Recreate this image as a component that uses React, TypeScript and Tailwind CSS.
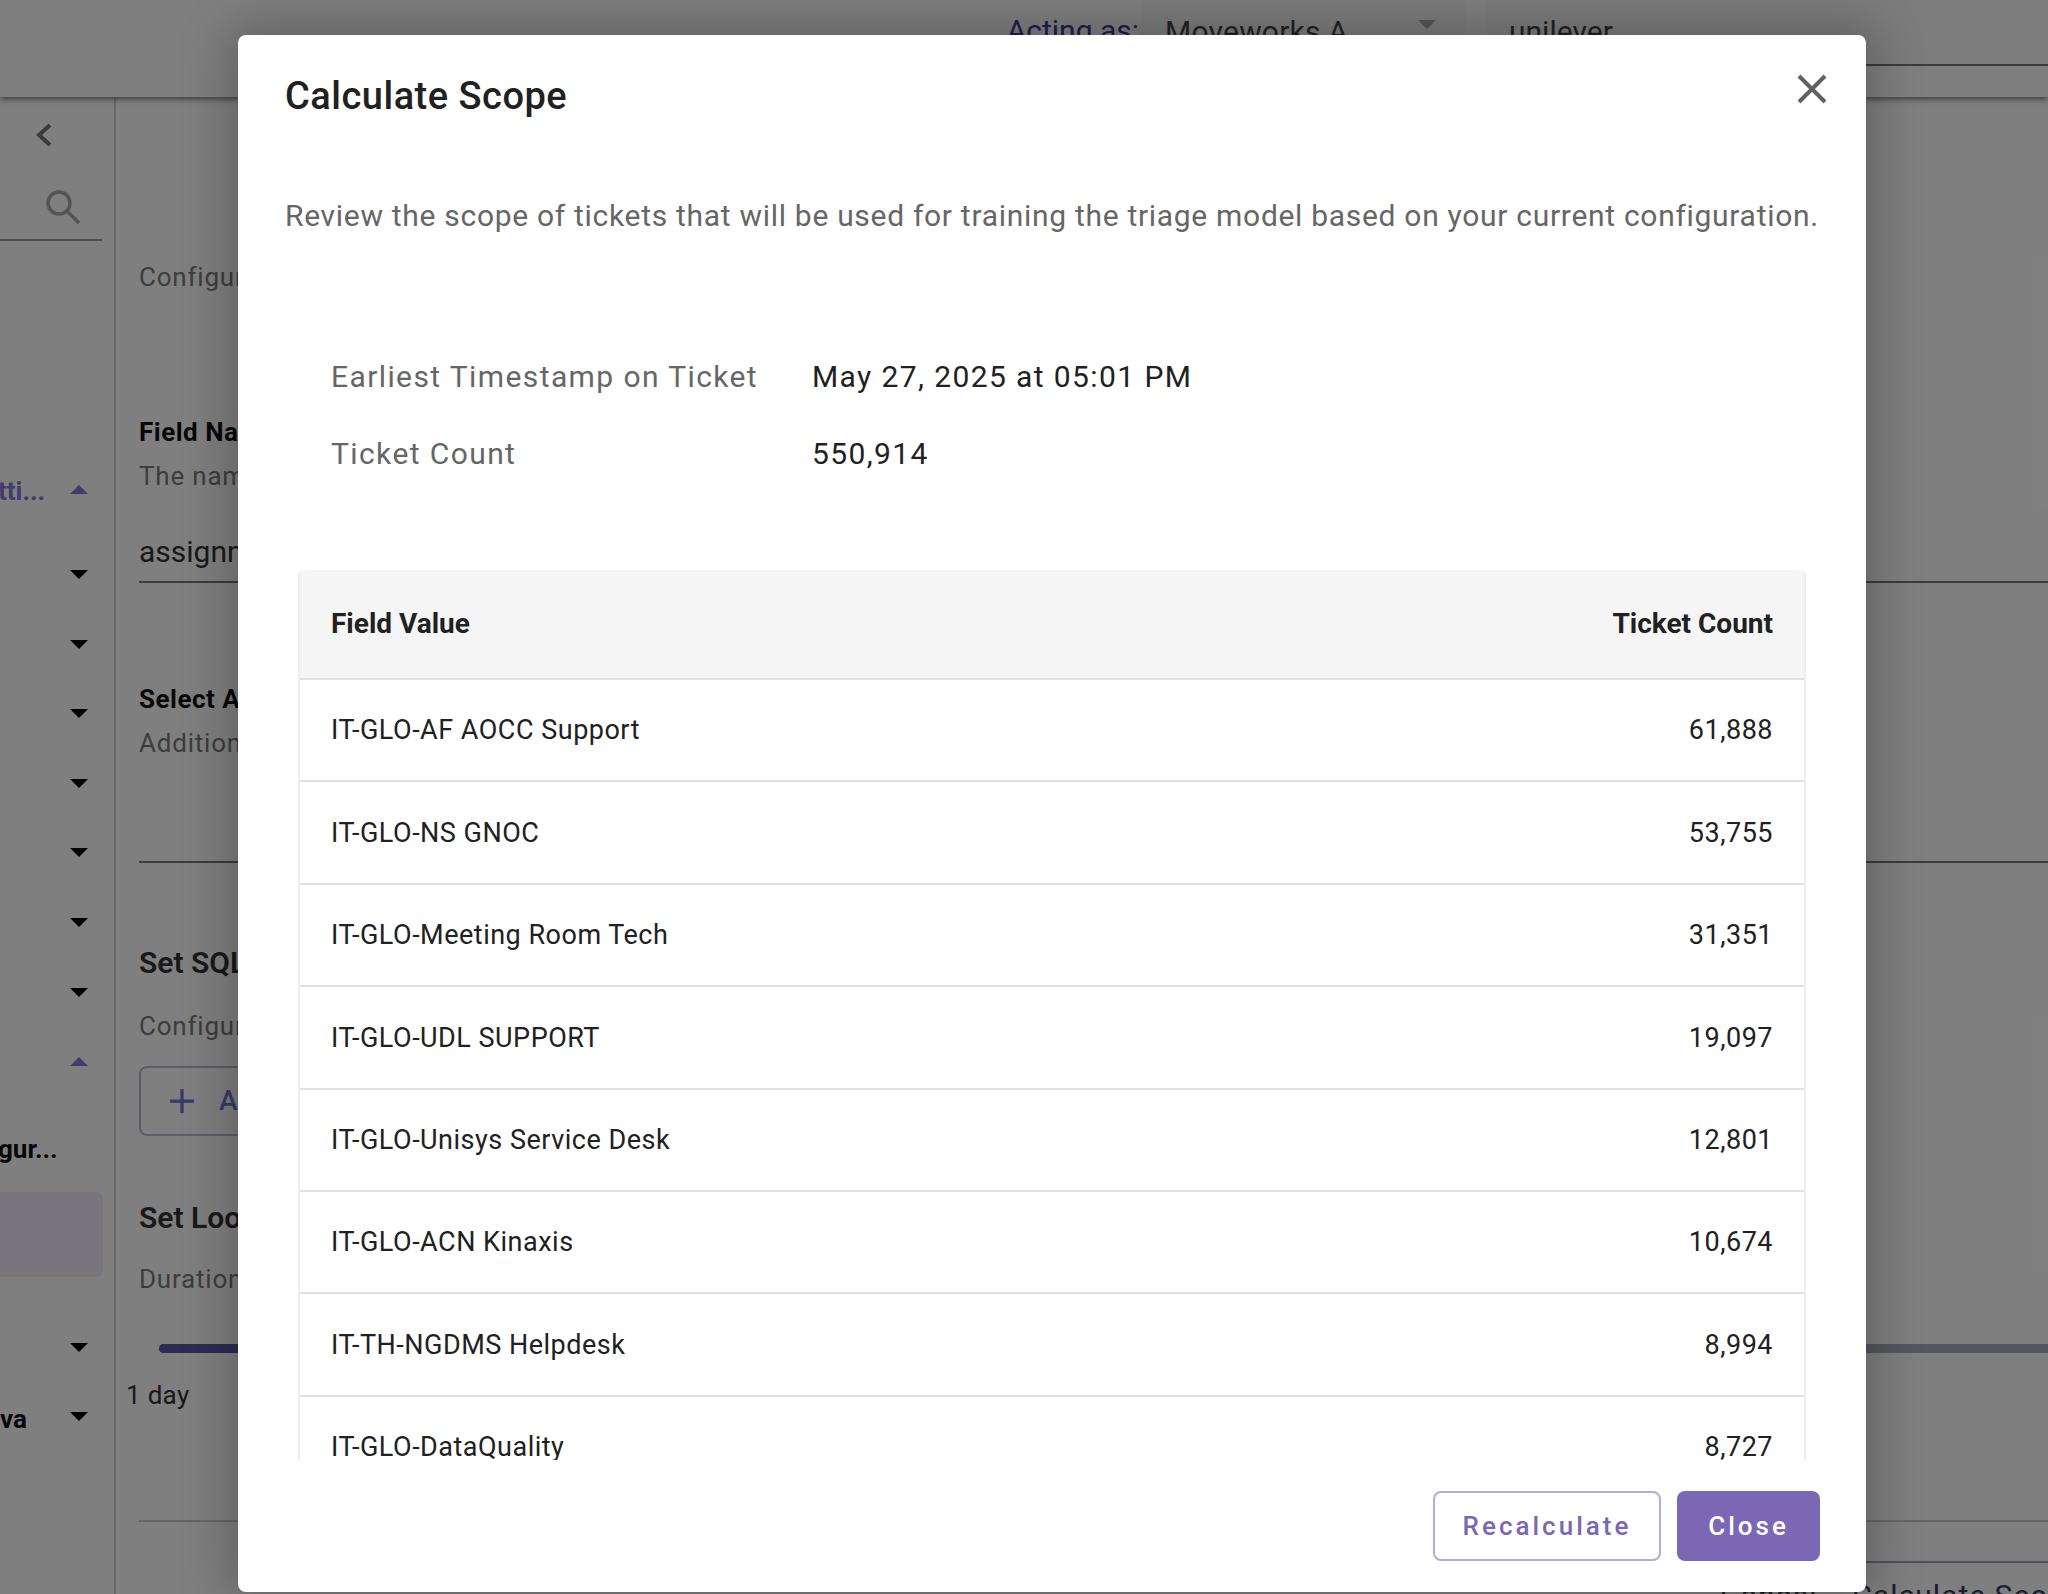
const rows = [
  ["IT-GLO-AF AOCC Support", "61,888"],
  ["IT-GLO-NS GNOC", "53,755"],
  ["IT-GLO-Meeting Room Tech", "31,351"],
  ["IT-GLO-UDL SUPPORT", "19,097"],
  ["IT-GLO-Unisys Service Desk", "12,801"],
  ["IT-GLO-ACN Kinaxis", "10,674"],
  ["IT-TH-NGDMS Helpdesk", "8,994"],
  ["IT-GLO-DataQuality", "8,727"],
  ["IT-GLO-Service Now", "7,412"],
];

function Caret({ up, className }: { up?: boolean; className: string }) {
  return (
    <svg viewBox="0 0 18 9" className={"w-[18px] h-[9px] " + className} fill="currentColor">
      <path d={up ? "M0 9 L9 0 L18 9 Z" : "M0 0 L18 0 L9 9 Z"} />
    </svg>
  );
}

function Sidebar() {
  return (
    <aside className="w-[116px] shrink-0 border-r-2 border-[#d2d2d2] h-[1497px] relative overflow-hidden">
      <div className="pl-[36px] pt-[26px] h-[144px] border-b-2 border-[#999] w-[102px]">
        <svg viewBox="0 0 16 24" className="w-[16px] h-[24px] text-[#777]" fill="none" stroke="currentColor" strokeWidth="4">
          <path d="M14 2 L3 12 L14 22" />
        </svg>
      </div>
      <svg viewBox="0 0 36 36" className="absolute left-[45px] top-[92px] w-[36px] h-[36px] text-[#a8a8a8]" fill="none" stroke="currentColor" strokeWidth="3.5">
        <circle cx="14" cy="14" r="11" />
        <path d="M22 22 L34 34" />
      </svg>
      <Caret up className="text-[#8576d8] absolute right-[26px] top-[388px]" />
      <div className="absolute right-[26px] top-[473px] flex flex-col gap-[60.6px]">
        <Caret className="text-[#000]" />
        <Caret className="text-[#000]" />
        <Caret className="text-[#000]" />
        <Caret className="text-[#000]" />
        <Caret className="text-[#000]" />
        <Caret className="text-[#000]" />
        <Caret className="text-[#000]" />
        <Caret up className="text-[#8576d8]" />
      </div>
      <Caret className="text-[#000] absolute right-[26px] top-[1246px]" />
      <Caret className="text-[#000] absolute right-[26px] top-[1315px]" />
      <span className="absolute -left-[2px] top-[378px] text-[26px] leading-[32px] font-bold text-[#8576d8]">tti...</span>
      <span className="absolute -left-[2px] top-[1036px] text-[26px] leading-[32px] font-bold text-[#111]">gur...</span>
      <span className="absolute left-0 top-[1306px] text-[26px] leading-[32px] font-bold text-[#111]">va</span>
      <div className="absolute left-0 top-[1095px] w-[103px] h-[85px] rounded-r-[6px] bg-[#f2ebfa]" />
    </aside>
  );
}

function PageBehind() {
  return (
    <div className="w-[2048px] h-[1594px] bg-white overflow-hidden relative z-0 text-[#444]">
      <header className="relative z-10 h-[97px] flex items-start justify-end bg-white shadow-[0_2px_6px_rgba(0,0,0,0.55)]">
        <span className="text-[30px] leading-[34px] mt-[14px] mr-[2px] text-[#4438a0]">Acting as:</span>
        <div className="w-[324px] h-[66px] bg-[#f8f8f8] flex justify-between pl-[24px] pr-[29px]">
          <span className="text-[30px] leading-[40px] mt-[12px] tracking-[0.2px]">Moveworks A</span>
          <Caret className="text-[#aaa] mt-[20px]" />
        </div>
        <div className="w-[562px] h-[66px] ml-[21px] bg-[#f8f8f8] border-b-2 border-[#777] pl-[23px]">
          <span className="text-[30px] leading-[40px] block mt-[12px]">unilever</span>
        </div>
      </header>
      <div className="flex">
        <Sidebar />
        <main className="flex-1 pl-[23px] pt-[165px] text-[#7a7a7a] min-w-0">
          <p className="text-[26px] leading-[30px] tracking-[0.8px]">Configure the field used for triage</p>
          <p className="mt-[125px] text-[26px] leading-[30px] tracking-[0.5px] font-bold text-[#111]">Field Name</p>
          <p className="mt-[14px] text-[26px] leading-[30px] tracking-[0.8px]">The name of the field</p>
          <div className="mt-[41px] h-[51px] border-b-2 border-[#777] text-[30px] leading-[40px] text-[#333]">assignment_group</div>
          <p className="mt-[101px] text-[26px] leading-[30px] tracking-[0.5px] font-bold text-[#111]">Select Additional Fields</p>
          <p className="mt-[14px] text-[26px] leading-[30px] tracking-[0.8px]">Additional fields to include</p>
          <div className="mt-[103px] border-b-2 border-[#777]" />
          <p className="mt-[82px] text-[30px] leading-[36px] font-semibold text-[#333]">Set SQL Filters</p>
          <p className="mt-[30px] text-[26px] leading-[30px] tracking-[0.8px]">Configure the filters</p>
          <div className="mt-[25px] w-[400px] h-[70px] border-2 border-[#bbbbcc] rounded-[8px] flex items-center pl-[28px] gap-[24px] text-[#7272d0]">
            <svg viewBox="0 0 24 24" className="w-[26px] h-[26px]" fill="none" stroke="currentColor" strokeWidth="3"><path d="M12 1 V23 M1 12 H23" /></svg>
            <span className="text-[28px] font-medium tracking-[1px]">Add Filter</span>
          </div>
          <p className="mt-[64px] text-[30px] leading-[36px] font-semibold text-[#333]">Set Lookback</p>
          <p className="mt-[28px] text-[26px] leading-[30px] tracking-[0.8px]">Duration of lookback</p>
          <div className="mt-[50px] ml-[20px] -mr-[20px] h-[9px] rounded-full bg-[#aaaabe] relative">
            <div className="absolute left-0 top-0 h-[9px] w-[600px] rounded-full bg-[#5a56a8]" />
          </div>
          <p className="mt-[25px] -ml-[13px] text-[26px] leading-[34px] tracking-[0.3px] text-[#333]">1 day</p>
          <div className="mt-[108px] border-b-2 border-[#ccc]" />
          <div className="mt-[39px] ml-[1200px] border-b-2 border-[#9e9eb4]" />
          <div className="flex justify-end gap-[35px] -mr-[35px] mt-[10px] text-[#3a3a66] text-[30px] tracking-[1px] whitespace-nowrap">
            <span>Cancel</span>
            <span>Calculate Scope</span>
          </div>
        </main>
      </div>
    </div>
  );
}

export default function App() {
  return (
    <div className="relative w-[2048px] h-[1594px] overflow-hidden" style={{ fontFamily: "Roboto, sans-serif" }}>
      <PageBehind />
      <div className="absolute inset-0 bg-black/50" />
      <div className="absolute left-[238px] top-[35px] w-[1628px] h-[1557px] bg-white rounded-[8px] shadow-[0_0_50px_8px_rgba(0,0,0,0.25)] flex flex-col">
        <div className="flex justify-between pl-[47px] pr-[39px] pt-[36px]">
          <h2 className="text-[38px] leading-[50px] font-medium text-[#212121] tracking-[0.5px]">Calculate Scope</h2>
          <svg viewBox="0 0 30 30" className="w-[30px] h-[30px] mt-[3px] text-[#616161]" fill="none" stroke="currentColor" strokeWidth="4">
            <path d="M2 2 L28 28 M28 2 L2 28" />
          </svg>
        </div>
        <p className="pl-[47px] mt-[75px] text-[30px] leading-[40px] text-[#666] tracking-[0.7px] whitespace-nowrap">
          Review the scope of tickets that will be used for training the triage model based on your current configuration.
        </p>
        <div className="pl-[93px] mt-[121px] grid grid-cols-[481px_1fr] gap-y-[37px] text-[30px] leading-[40px] tracking-[1.4px]">
          <span className="text-[#666]">Earliest Timestamp on Ticket</span>
          <span className="text-[#212121]">May 27, 2025 at 05:01 PM</span>
          <span className="text-[#666]">Ticket Count</span>
          <span className="text-[#212121]">550,914</span>
        </div>
        <div className="ml-[60px] mr-[60px] mt-[96px] h-[890px] overflow-hidden">
          <div className="border-x-2 border-[#ededed] rounded-t-[6px]">
            <div className="h-[110px] bg-[#f5f5f5] border-b-2 border-[#e0e0e0] flex items-center justify-between px-[31px] text-[28px] font-bold text-[#212121] rounded-t-[6px]">
              <span>Field Value</span>
              <span>Ticket Count</span>
            </div>
            {rows.map((r) => (
              <div key={r[0]} className="h-[102.4px] pt-[1px] border-b-2 border-[#e0e0e0] flex items-center justify-between px-[31px] text-[27px] tracking-[0.5px] text-[#212121]">
                <span>{r[0]}</span>
                <span>{r[1]}</span>
              </div>
            ))}
          </div>
        </div>
        <div className="flex justify-end gap-[16px] pr-[46px] mt-[31px]">
          <button className="w-[228px] h-[70px] rounded-[8px] border-2 border-[#b5abdb] text-[#7b68b5] text-[26px] font-medium tracking-[3px]">Recalculate</button>
          <button className="w-[143px] h-[70px] rounded-[8px] bg-[#7b68b5] text-white text-[26px] font-medium tracking-[3px]">Close</button>
        </div>
      </div>
    </div>
  );
}
